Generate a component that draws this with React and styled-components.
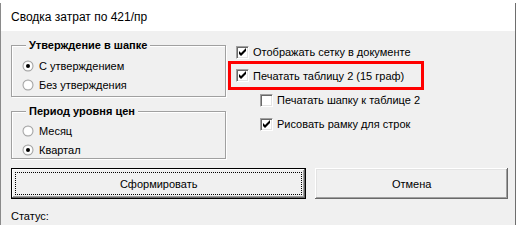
import React from 'react';
import styled, { createGlobalStyle } from 'styled-components';

const GlobalStyle = createGlobalStyle`
  html, body {
    margin: 0;
    padding: 0;
    background: #ffffff;
  }
  body {
    font-family: "Liberation Sans", Arial, sans-serif;
    font-size: 11px;
    color: #000;
  }
`;

function CheckIcon() {
  return (
    <svg width="9" height="9" viewBox="0 0 9 9">
      <path d="M1 3 L3 5 L8 0 L8 3 L3 8 L1 6 Z" fill="#000" />
    </svg>
  );
}

function RadioIcon({ checked }) {
  return (
    <svg width="12" height="12" viewBox="0 0 12 12">
      <circle cx="6" cy="6" r="5.5" fill="#a0a0a0" />
      <circle cx="6" cy="6" r="4.6" fill="#e3e3e3" />
      <circle cx="6" cy="6" r="4" fill="#fff" />
      {checked && <circle cx="6" cy="6" r="2" fill="#000" />}
    </svg>
  );
}

function App() {
  return (
    <>
      <GlobalStyle />
      <Window>
        <TitleBar>Сводка затрат по 421/пр</TitleBar>
        <Body>
          <Main>
            <LeftColumn>
              <Group $height={52} $padTop={10}>
                <Legend>Утверждение в шапке</Legend>
                <RadioRow>
                  <RadioIcon checked />
                  <span>С утверждением</span>
                </RadioRow>
                <RadioRow>
                  <RadioIcon />
                  <span>Без утверждения</span>
                </RadioRow>
              </Group>
              <Group $height={48} $padTop={9}>
                <Legend>Период уровня цен</Legend>
                <RadioRow>
                  <RadioIcon />
                  <span>Месяц</span>
                </RadioRow>
                <RadioRow>
                  <RadioIcon checked />
                  <span>Квартал</span>
                </RadioRow>
              </Group>
            </LeftColumn>
            <RightColumn>
              <CheckRow $indent={8}>
                <CheckBox>
                  <CheckIcon />
                </CheckBox>
                <span>Отображать сетку в документе</span>
              </CheckRow>
              <Highlight>
                <CheckRow $indent={5}>
                  <CheckBox>
                    <CheckIcon />
                  </CheckBox>
                  <span>Печатать таблицу 2 (15 граф)</span>
                </CheckRow>
              </Highlight>
              <CheckRow $indent={32}>
                <CheckBox />
                <span>Печатать шапку к таблице 2</span>
              </CheckRow>
              <CheckRow $indent={32} $gap={4}>
                <CheckBox>
                  <CheckIcon />
                </CheckBox>
                <span>Рисовать рамку для строк</span>
              </CheckRow>
            </RightColumn>
          </Main>
          <Buttons>
            <Button $default $width={296}>
              <Caption $focused>Сформировать</Caption>
            </Button>
            <Button $width={193}>
              <Caption>Отмена</Caption>
            </Button>
          </Buttons>
          <Status>Статус:</Status>
        </Body>
      </Window>
    </>
  );
}

export default App;

const Window = styled.div`
  margin-top: 3px;
  width: 516px;
  height: 222px;
  box-sizing: border-box;
  border-left: 1px solid #8a8a8a;
  border-right: 1px solid #6e6e6e;
  display: flex;
  flex-direction: column;
  overflow: hidden;
`;

const TitleBar = styled.div`
  height: 28px;
  flex: none;
  background: #fff;
  display: flex;
  align-items: center;
  padding-left: 10px;
  font-family: "Liberation Sans", Arial, sans-serif;
  font-size: 12px;
  color: #000;
`;

const Body = styled.div`
  flex: 1;
  background: #f0f0f0;
  padding: 0 7px 0 10px;
  display: flex;
  flex-direction: column;
`;

const Main = styled.div`
  display: grid;
  grid-template-columns: 215px 1fr;
  column-gap: 2px;
  align-items: start;
`;

const LeftColumn = styled.div`
  padding-top: 14px;
  display: flex;
  flex-direction: column;
  gap: 14px;
`;

const Group = styled.div`
  position: relative;
  height: ${p => p.$height}px;
  box-sizing: border-box;
  border: 1px solid #a0a0a0;
  box-shadow: inset 1px 1px #fff, 1px 1px #fff;
  padding: ${p => p.$padTop}px 0 0 10px;
`;

const Legend = styled.span`
  position: absolute;
  top: -8px;
  left: 14px;
  padding: 0 3px;
  background: #f0f0f0;
  font-weight: bold;
  font-size: 11px;
  line-height: 14px;
`;

const RadioRow = styled.div`
  height: 19px;
  display: flex;
  align-items: center;
  gap: 5px;
`;

const RightColumn = styled.div`
  padding-top: 11px;
  display: flex;
  flex-direction: column;
`;

const CheckRow = styled.div`
  height: 20px;
  display: flex;
  align-items: center;
  gap: 4px;
  padding-left: ${p => p.$indent}px;
  margin-top: ${p => p.$gap || 0}px;
`;

const Highlight = styled.div`
  margin-top: -1px;
  width: 196px;
  height: 29px;
  box-sizing: border-box;
  border: 3px solid #ff0000;
  display: flex;
  align-items: center;
`;

const CheckBox = styled.span`
  width: 13px;
  height: 13px;
  box-sizing: border-box;
  flex: none;
  background: #fff;
  border-top: 1px solid #a0a0a0;
  border-left: 1px solid #a0a0a0;
  border-right: 1px solid #fff;
  border-bottom: 1px solid #fff;
  box-shadow: inset 1px 1px #696969, inset -1px -1px #e3e3e3;
  display: flex;
  align-items: center;
  justify-content: center;
`;

const Buttons = styled.div`
  margin-top: 9px;
  display: flex;
  gap: 9px;
`;

const Button = styled.button`
  width: ${p => p.$width}px;
  height: 31px;
  padding: 0;
  box-sizing: border-box;
  background: #f0f0f0;
  font-family: "Liberation Sans", Arial, sans-serif;
  font-size: 11px;
  color: #000;
  border: ${p => (p.$default ? '1px solid #000' : 'none')};
  box-shadow: ${p =>
    p.$default
      ? 'inset -1px -1px #696969, inset 1px 1px #fff, inset -2px -2px #a0a0a0'
      : 'inset -1px -1px #696969, inset 1px 1px #fff, inset -2px -2px #a0a0a0, inset 2px 2px #e3e3e3'};
  display: flex;
  align-items: stretch;
  justify-content: center;
`;

const Caption = styled.span`
  flex: 1;
  margin: 3px;
  border: 1px ${p => (p.$focused ? 'dotted #000' : 'solid transparent')};
  display: flex;
  align-items: center;
  justify-content: center;
`;

const Status = styled.div`
  margin-top: 11px;
  font-size: 11px;
`;
